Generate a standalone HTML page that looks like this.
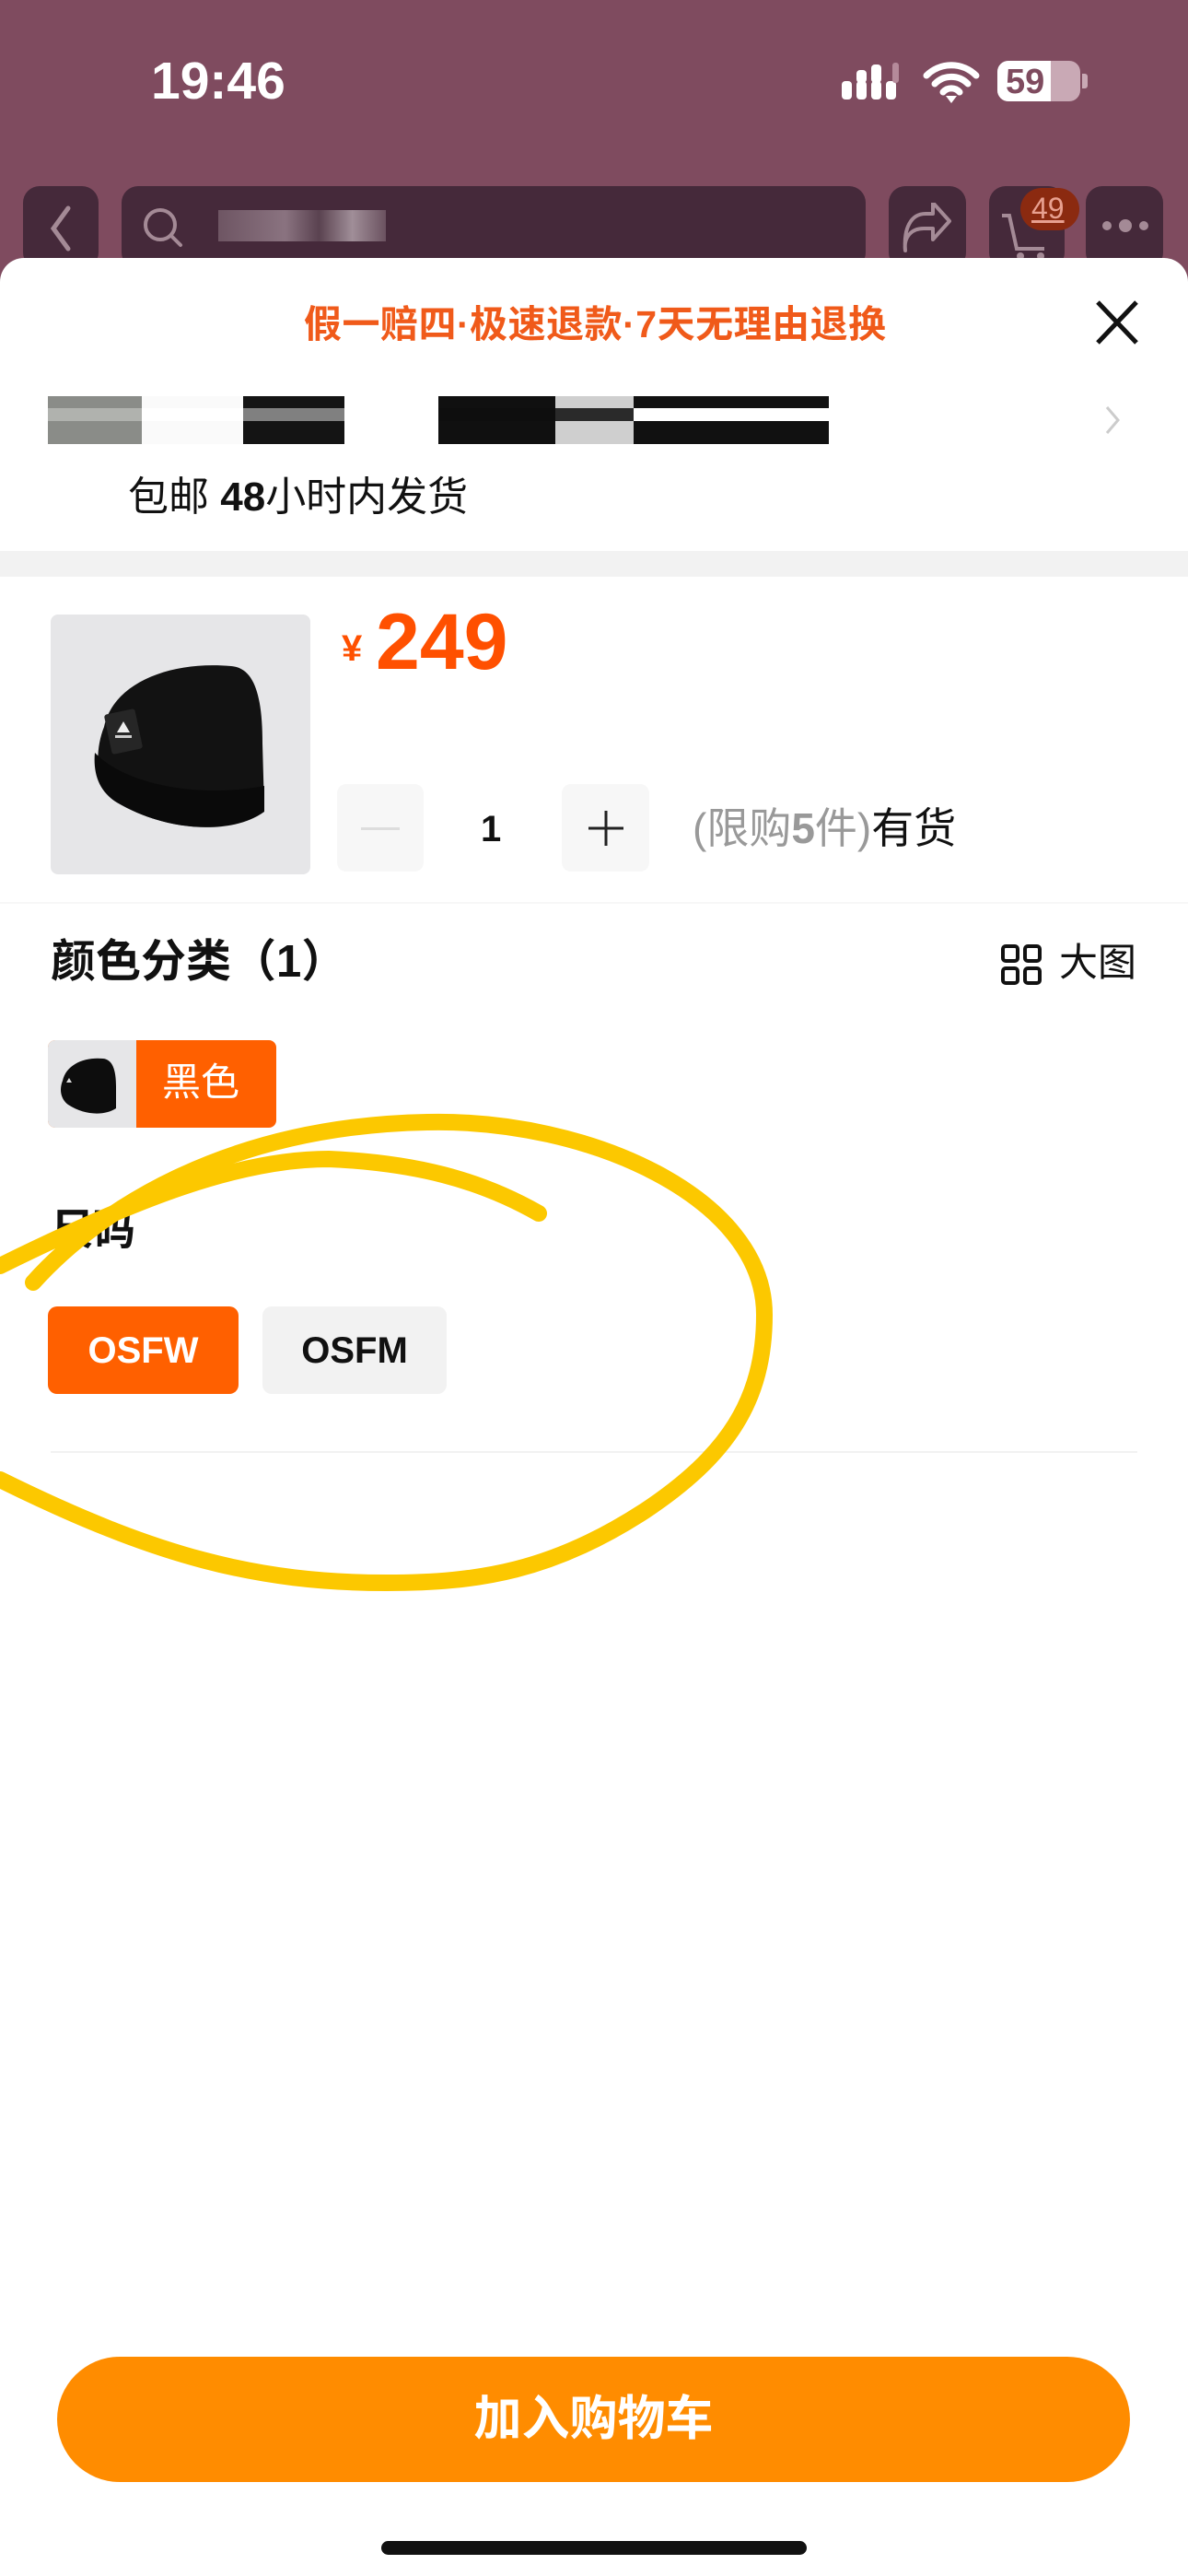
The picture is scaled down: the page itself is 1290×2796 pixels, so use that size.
<!DOCTYPE html>
<html><head><meta charset="utf-8"><style>
*{margin:0;padding:0;box-sizing:border-box}
body{width:1290px;height:2796px;background:#7f4b5f;position:relative;overflow:hidden;font-family:"Liberation Sans","Noto Sans CJK SC",sans-serif}
.a{position:absolute}
.nb{position:absolute;top:202px;height:90px;background:#45293a;border-radius:18px}
.sheet{position:absolute;left:0;top:280px;width:1290px;height:2516px;background:#fff;border-radius:26px 26px 0 0}
.t{position:absolute;white-space:nowrap;line-height:1}
</style></head><body>
<div class="t" style="left:164px;top:60px;font-size:57px;font-weight:bold;color:#fff">19:46</div>
<svg class="a" style="left:912px;top:68px" width="70" height="42"><g fill="#fff"><rect x="2" y="20" width="11" height="20" rx="4"/><rect x="18" y="20" width="11" height="20" rx="4"/><rect x="34" y="20" width="11" height="20" rx="4"/><rect x="50" y="20" width="11" height="20" rx="4"/><rect x="18" y="8" width="11" height="14" rx="4"/><rect x="34" y="2" width="11" height="20" rx="4"/></g><rect x="57" y="0" width="7" height="22" rx="3" fill="#b58a9a"/></svg>
<svg class="a" style="left:1002px;top:66px" width="62" height="46" viewBox="0 0 62 46"><path d="M4 16a38 38 0 0 1 54 0M13 25a25 25 0 0 1 36 0M22 34a12 12 0 0 1 18 0" stroke="#fff" stroke-width="7" fill="none" stroke-linecap="round"/><path d="M25 38l6 8 6-8z" fill="#fff"/></svg>
<div class="a" style="left:1083px;top:66px;width:90px;height:44px;border-radius:12px;background:#c9a9b5;overflow:hidden"><div style="width:58px;height:44px;background:#fff"></div></div>
<div class="t" style="left:1092px;top:70px;font-size:38px;font-weight:bold;color:#7f4b5f">59</div>
<div class="a" style="left:1175px;top:80px;width:6px;height:16px;background:#c9a9b5;border-radius:0 3px 3px 0"></div>

<div class="nb" style="left:25px;width:82px"></div>
<svg class="a" style="left:48px;top:220px" width="36" height="56"><path d="M26 6L10 28l16 22" stroke="#a48a96" stroke-width="5" fill="none" stroke-linecap="round"/></svg>
<div class="nb" style="left:132px;width:808px"></div>
<svg class="a" style="left:152px;top:222px" width="52" height="52"><circle cx="22" cy="22" r="16" stroke="#a48a96" stroke-width="4" fill="none"/><path d="M34 34l10 10" stroke="#a48a96" stroke-width="4" stroke-linecap="round"/></svg>
<div class="a" style="left:237px;top:228px;width:182px;height:34px;background:linear-gradient(90deg,#6e5563,#8a7380 40%,#5a4250 60%,#a08e98 80%,#6b5260)"></div>
<div class="nb" style="left:965px;width:84px"></div>
<svg class="a" style="left:975px;top:220px" width="66" height="60"><path d="M8 52C6 38 14 28 28 28h10v12l18-20-18-20v12H30C14 12 6 28 8 52z" stroke="#a48a96" stroke-width="4" fill="none" stroke-linejoin="round"/></svg>
<div class="nb" style="left:1074px;width:82px"></div>
<svg class="a" style="left:1084px;top:228px" width="60" height="56"><path d="M4 6h8l8 36h30" stroke="#a48a96" stroke-width="4" fill="none"/><circle cx="24" cy="50" r="4" fill="#a48a96"/><circle cx="46" cy="50" r="4" fill="#a48a96"/></svg>
<div class="a" style="left:1108px;top:204px;width:64px;height:46px;border-radius:23px;background:#8b2a10"></div>
<div class="t" style="left:1120px;top:210px;font-size:32px;color:#e8a090;text-decoration:underline">49</div>
<div class="nb" style="left:1179px;width:84px"></div>
<svg class="a" style="left:1192px;top:230px" width="60" height="30"><circle cx="10" cy="15" r="5" fill="#a48a96"/><circle cx="30" cy="15" r="7" fill="#a48a96"/><circle cx="50" cy="15" r="5" fill="#a48a96"/></svg>

<div class="sheet"></div>
<div class="t" style="left:330px;top:332px;font-size:41px;font-weight:bold;color:#f05a1a;letter-spacing:0.5px">假一赔四·极速退款·7天无理由退换</div>
<svg class="a" style="left:1188px;top:324px" width="50" height="52"><path d="M4 4l42 44M46 4L4 48" stroke="#111" stroke-width="5"/></svg>
<div class="a" style="left:52px;top:430px;width:848px;height:52px;background:linear-gradient(90deg,#8a8c88 0 12%,#fafafa 12% 25%,#141414 25% 38%,#fff 38% 50%,#101010 50% 65%,#cfcfcf 65% 75%,#111 75% 100%)"></div>
<div class="a" style="left:52px;top:443px;width:848px;height:14px;background:linear-gradient(90deg,#b0b2ae 0 12%,#fff 12% 25%,#808080 25% 38%,#fff 38% 50%,#0e0e0e 50% 65%,#2a2a2a 65% 75%,#fff 75% 100%)"></div>
<svg class="a" style="left:1196px;top:438px" width="24" height="36"><path d="M6 4l12 14L6 32" stroke="#ccc" stroke-width="3" fill="none"/></svg>
<div class="t" style="left:139px;top:518px;font-size:44px;color:#111">包邮 <b>48</b>小时内发货</div>
<div class="a" style="left:0;top:598px;width:1290px;height:28px;background:#f2f2f2"></div>

<div class="a" style="left:55px;top:667px;width:282px;height:282px;background:#e6e6e8;border-radius:8px"></div>
<svg class="a" style="left:55px;top:667px" width="282" height="282"><path d="M58 122C68 74 130 50 196 56C222 58 230 90 230 140L232 212C200 238 130 238 72 204C50 192 46 152 58 122Z" fill="#121212"/><path d="M48 150C80 184 160 200 232 186L232 214C200 238 130 238 72 204C52 192 46 172 48 150Z" fill="#0a0a0a"/><rect x="62" y="105" width="34" height="44" rx="3" fill="#262626" transform="rotate(-12 79 127)"/><path d="M72 128l7-12 7 12z" fill="#eee"/><rect x="70" y="131" width="18" height="3" fill="#ccc"/></svg>
<div class="t" style="left:371px;top:684px;font-size:40px;font-weight:bold;color:#ff5000">¥</div>
<div class="t" style="left:408px;top:654px;font-size:86px;font-weight:bold;color:#ff5000">249</div>
<div class="a" style="left:366px;top:851px;width:94px;height:95px;background:#f7f7f7;border-radius:10px"></div>
<div class="a" style="left:392px;top:898px;width:42px;height:3px;background:#ddd"></div>
<div class="t" style="left:522px;top:880px;font-size:40px;font-weight:bold;color:#111">1</div>
<div class="a" style="left:610px;top:851px;width:95px;height:95px;background:#f7f7f7;border-radius:10px"></div>
<svg class="a" style="left:635px;top:876px" width="46" height="46"><path d="M23 4v38M4 23h38" stroke="#222" stroke-width="3"/></svg>
<div class="t" style="left:752px;top:876px;font-size:46px;color:#999">(限购<b>5</b>件)<span style="color:#111">有货</span></div>
<div class="a" style="left:0;top:979px;width:1290px;height:2px;background:#f7f7f7"></div>

<div class="t" style="left:55px;top:1020px;font-size:49px;font-weight:bold;color:#111">颜色分类（1）</div>
<svg class="a" style="left:1086px;top:1024px" width="46" height="46"><g stroke="#111" stroke-width="4" fill="none"><rect x="3" y="3" width="16" height="16" rx="3"/><rect x="27" y="3" width="16" height="16" rx="3"/><rect x="3" y="27" width="16" height="16" rx="3"/><rect x="27" y="27" width="16" height="16" rx="3"/></g></svg>
<div class="t" style="left:1150px;top:1024px;font-size:42px;color:#111">大图</div>
<div class="a" style="left:52px;top:1129px;width:248px;height:95px;background:#ff6000;border-radius:8px;overflow:hidden"><div style="width:96px;height:95px;background:#e6e6e8"></div></div>
<svg class="a" style="left:52px;top:1129px" width="96" height="95"><path d="M16 44C20 26 40 18 60 20C70 21 74 32 74 50L74 74C62 82 40 82 22 70C14 64 12 54 16 44Z" fill="#0d0d0d"/><path d="M20 46l3-5 3 5z" fill="#ddd"/></svg>
<div class="t" style="left:176px;top:1154px;font-size:42px;color:#fff">黑色</div>

<div class="t" style="left:55px;top:1312px;font-size:46px;font-weight:bold;color:#111">尺码</div>
<div class="a" style="left:52px;top:1418px;width:207px;height:95px;background:#ff6000;border-radius:10px"></div>
<div class="t" style="left:52px;top:1446px;width:207px;text-align:center;font-size:40px;font-weight:bold;color:#fff">OSFW</div>
<div class="a" style="left:285px;top:1418px;width:200px;height:95px;background:#f2f2f2;border-radius:10px"></div>
<div class="t" style="left:285px;top:1446px;width:200px;text-align:center;font-size:40px;font-weight:bold;color:#111">OSFM</div>
<div class="a" style="left:55px;top:1575px;width:1180px;height:2px;background:#f2f2f2"></div>

<svg class="a" style="left:0;top:0" width="1290" height="2000"><g stroke="#fcc800" stroke-width="18" fill="none" stroke-linecap="round"><path d="M36 1392C110 1310 250 1222 464 1218C640 1214 830 1300 830 1427C830 1520 790 1580 700 1640C600 1705 520 1718 420 1718C280 1718 170 1690 0 1606"/><path d="M585 1317C520 1280 450 1262 357 1258C260 1258 150 1300 0 1374"/></g></svg>

<div class="a" style="left:62px;top:2558px;width:1165px;height:136px;background:#ff8c00;border-radius:68px"></div>
<div class="t" style="left:62px;top:2600px;width:1165px;text-align:center;font-size:52px;font-weight:bold;color:#fff">加入购物车</div>
<div class="a" style="left:414px;top:2758px;width:462px;height:15px;background:#111;border-radius:8px"></div>
</body></html>
